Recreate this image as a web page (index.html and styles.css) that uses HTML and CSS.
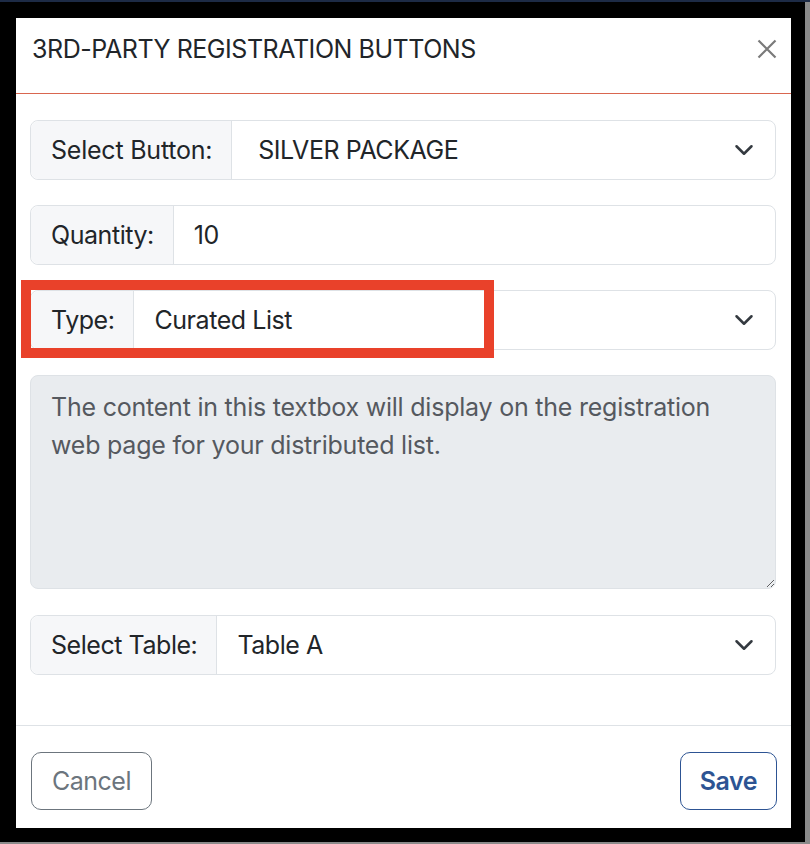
FILE: index.html
```html
<!DOCTYPE html>
<html lang="en">
<head>
<meta charset="utf-8">
<title>3rd-Party Registration Buttons</title>
<link rel="stylesheet" href="styles.css">
</head>
<body>
<div class="frame">
  <div class="modal">
    <div class="modal-header">
      <h5 class="modal-title">3RD-PARTY REGISTRATION BUTTONS</h5>
      <button class="btn-close" type="button" aria-label="Close">
        <svg width="20" height="20" viewBox="0 0 20 20"><path d="M1.5 1.5 L18.5 18.5 M18.5 1.5 L1.5 18.5" stroke="#7a7a7a" stroke-width="2.2" fill="none"/></svg>
      </button>
    </div>
    <div class="modal-body">
      <div class="input-group">
        <span class="group-label label-wide">Select Button:</span>
        <div class="group-control select">
          <span class="value value-indent">SILVER PACKAGE</span>
          <svg class="chevron" width="20" height="20" viewBox="0 0 16 16"><path fill="none" stroke="#343a40" stroke-linecap="round" stroke-linejoin="round" stroke-width="2" d="m2 5 6 6 6-6"/></svg>
        </div>
      </div>
      <div class="input-group">
        <span class="group-label">Quantity:</span>
        <div class="group-control">
          <span class="value">10</span>
        </div>
      </div>
      <div class="input-group highlighted">
        <span class="group-label">Type:</span>
        <div class="group-control select">
          <span class="value">Curated List</span>
          <svg class="chevron" width="20" height="20" viewBox="0 0 16 16"><path fill="none" stroke="#343a40" stroke-linecap="round" stroke-linejoin="round" stroke-width="2" d="m2 5 6 6 6-6"/></svg>
        </div>
        <div class="annotation"></div>
      </div>
      <textarea class="textbox" readonly>The content in this textbox will display on the registration web page for your distributed list.</textarea>
      <div class="input-group">
        <span class="group-label">Select Table:</span>
        <div class="group-control select">
          <span class="value">Table A</span>
          <svg class="chevron" width="20" height="20" viewBox="0 0 16 16"><path fill="none" stroke="#343a40" stroke-linecap="round" stroke-linejoin="round" stroke-width="2" d="m2 5 6 6 6-6"/></svg>
        </div>
      </div>
    </div>
    <div class="modal-footer">
      <button class="btn btn-cancel" type="button">Cancel</button>
      <button class="btn btn-save" type="button">Save</button>
    </div>
  </div>
</div>
</body>
</html>
```
FILE: styles.css
```css
* { box-sizing: border-box; }
html, body { margin: 0; padding: 0; }
body {
  background: #8a8a8a;
  border-top: 2px solid #1d2b46;
  font-family: Inter, "Noto Sans", "Liberation Sans", sans-serif;
  color: #212529;
  letter-spacing: -0.22px;
  height: 844px;
  overflow: hidden;
}
.frame {
  width: 805px;
  background: #000;
  padding: 16px 14px 14px 16px;
}
.modal {
  background: #fff;
  width: 775px;
  height: 810px;
  display: flex;
  flex-direction: column;
}
.modal-header {
  height: 76px;
  border-bottom: 1px solid #d9664f;
  display: flex;
  align-items: flex-start;
  justify-content: space-between;
  padding: 16px 14px 0 16px;
}
.modal-title {
  margin: 0;
  font-size: 25px;
  line-height: 30px;
  font-weight: 400;
  letter-spacing: -0.45px;
  color: #212529;
}
.btn-close {
  border: 0;
  background: none;
  padding: 0;
  margin-top: 5px;
  width: 20px;
  height: 20px;
  display: flex;
}
.modal-body {
  flex: 1;
  padding: 26px 15px 0 14px;
}
.input-group {
  display: flex;
  height: 60px;
  border: 1px solid #dee2e6;
  border-radius: 8px;
  margin-bottom: 25px;
  font-size: 25px;
  line-height: 37px;
  letter-spacing: -0.45px;
}
.group-label {
  background: #f6f7f9;
  border-right: 1px solid #dee2e6;
  border-radius: 8px 0 0 8px;
  padding: 0 19px 0 20px;
  display: flex;
  align-items: center;
  color: #212529;
}
.label-wide { letter-spacing: -0.22px; }
.group-control {
  flex: 1;
  display: flex;
  align-items: center;
  padding: 0 0 0 20px;
}
.value { flex: 1; }
.value-indent { padding-left: 6px; }
.chevron { margin-right: 21px; flex: none; }
.highlighted { position: relative; }
.annotation {
  position: absolute;
  left: -10px;
  top: -11px;
  width: 473px;
  height: 78px;
  border: 10px solid #e9412a;
  pointer-events: none;
}
.textbox {
  display: block;
  width: 100%;
  height: 214px;
  margin: 0 0 26px;
  background: #e9ecef;
  border: 1px solid #dee2e6;
  border-radius: 8px;
  padding: 13px 20px 12px;
  font-family: inherit;
  font-size: 25px;
  line-height: 37.5px;
  letter-spacing: -0.22px;
  color: #55595f;
  resize: vertical;
  outline: none;
}
.modal-footer {
  border-top: 1px solid #dee2e6;
  display: flex;
  justify-content: space-between;
  align-items: flex-start;
  padding: 26px 14px 18px 15px;
}
.btn {
  height: 58px;
  padding: 0 20px;
  border-radius: 10px;
  background: #fff;
  font-family: inherit;
  font-size: 25px;
  line-height: 37px;
  letter-spacing: -0.5px;
}
.btn-cancel {
  border: 1px solid #6c757d;
  color: #6c757d;
  font-weight: 400;
}
.btn-save {
  border: 1px solid #2d5493;
  color: #2d5493;
  font-weight: 600;
  padding: 0 19px;
}
```
